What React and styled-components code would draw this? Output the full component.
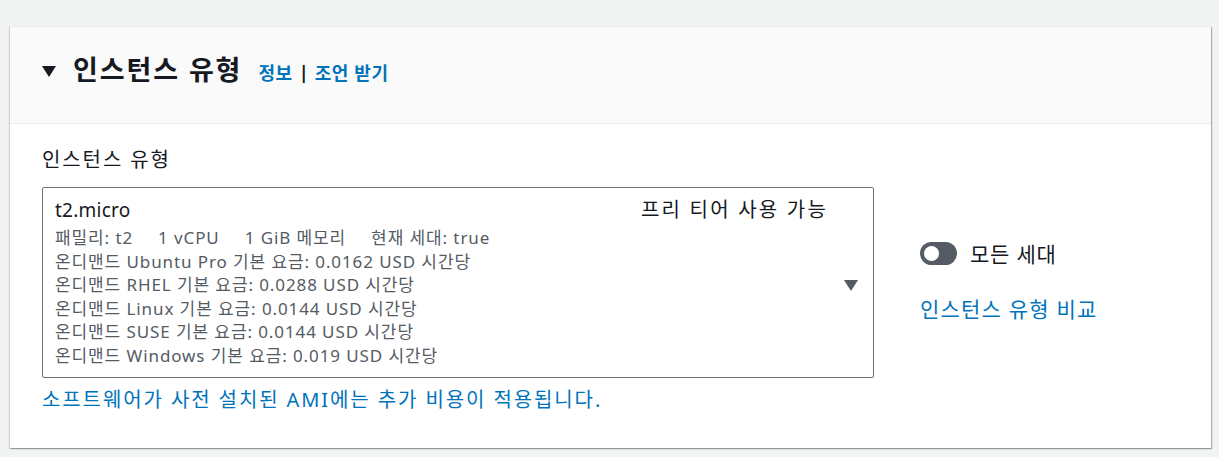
import React from "react";
import styled, { createGlobalStyle } from "styled-components";

const Global = createGlobalStyle`
  body {
    margin: 0;
    background: #f2f3f3;
    font-family: "Noto Sans", "Noto Sans CJK KR", sans-serif;
    color: #16191f;
  }
`;

const Page = styled.div`
  padding: 26px 8px 9px 10px;
`;

const Card = styled.section`
  background: #fff;
  border-top: 1px solid #e9ebed;
  box-shadow: 1px 1px 1px 0 rgba(0, 28, 36, 0.3), -1px 1px 1px 0 rgba(0, 28, 36, 0.15);
`;

const Header = styled.div`
  height: 97px;
  box-sizing: border-box;
  background: #fafafa;
  border-bottom: 1px solid #eaeded;
  display: flex;
  align-items: center;
  padding: 0 32px 10px 32px;
`;

const Caret = styled.span`
  width: 0;
  height: 0;
  border-left: 7px solid transparent;
  border-right: 7px solid transparent;
  border-top: 11px solid #16191f;
  margin-right: 17px;
  margin-top: 3px;
`;

const Title = styled.h2`
  margin: 0;
  font-size: 27px;
  line-height: 36px;
  letter-spacing: 1.9px;
  font-weight: 700;
  color: #16191f;
`;

const Links = styled.span`
  margin-left: 16px;
  margin-top: 4px;
  font-size: 18px;
  font-weight: 700;
  color: #16191f;
  display: flex;
  align-items: center;
  gap: 6px;
`;

const Link = styled.a`
  color: #0073bb;
  text-decoration: none;
  font-weight: ${(p) => (p.$bold ? 700 : 400)};
  letter-spacing: ${(p) => p.$spacing || "0px"};
`;

const Body = styled.div`
  padding: 22px 32px 34px 32px;
`;

const Label = styled.div`
  font-size: 20px;
  letter-spacing: 1.9px;
  line-height: 28px;
  margin-bottom: 13px;
`;

const Row = styled.div`
  display: flex;
  align-items: center;
  gap: 46px;
`;

const Select = styled.div`
  width: 832px;
  box-sizing: border-box;
  border: 1px solid #687078;
  border-radius: 2px;
  padding: 9px 12px 10px 12px;
  display: flex;
  align-items: center;
`;

const SelectContent = styled.div`
  flex: 1;
`;

const TopLine = styled.div`
  display: flex;
  justify-content: space-between;
  line-height: 26px;
  margin-bottom: 3px;
`;

const Name = styled.span`
  font-size: 19px;
  letter-spacing: 0.25px;
`;

const Badge = styled.span`
  font-size: 20px;
  margin-right: 12px;
  letter-spacing: 2.2px;
`;

const Detail = styled.div`
  font-size: 17px;
  letter-spacing: 0.9px;
  line-height: 23.5px;
  color: #545b64;
  display: flex;
  gap: 25px;
`;

const Arrow = styled.span`
  width: 0;
  height: 0;
  border-left: 7px solid transparent;
  border-right: 7px solid transparent;
  border-top: 11px solid #545b64;
  margin: 6px 3px 0 4px;
`;

const Side = styled.div`
  display: flex;
  flex-direction: column;
  gap: 27px;
  margin-top: -3px;
`;

const ToggleRow = styled.label`
  display: flex;
  align-items: center;
  gap: 13px;
  font-size: 21px;
  line-height: 28px;
  letter-spacing: 0.8px;
`;

const Toggle = styled.span`
  width: 37px;
  height: 23px;
  border-radius: 12px;
  background: #545b64;
  position: relative;
  &::after {
    content: "";
    position: absolute;
    left: 4px;
    top: 4px;
    width: 15px;
    height: 15px;
    border-radius: 50%;
    background: #fff;
  }
`;

const SideLink = styled(Link)`
  font-size: 21px;
  line-height: 28px;
`;

const Note = styled(Link)`
  display: block;
  margin-top: 8px;
  font-size: 20px;
  line-height: 28px;
`;

const prices = [
  ["Ubuntu Pro", "0.0162"],
  ["RHEL", "0.0288"],
  ["Linux", "0.0144"],
  ["SUSE", "0.0144"],
  ["Windows", "0.019"],
];

export default function App() {
  return (
    <>
      <Global />
      <Page>
        <Card>
          <Header>
            <Caret />
            <Title>인스턴스 유형</Title>
            <Links>
              <Link $bold $spacing="0.6px">정보</Link>|
              <Link $bold $spacing="0.6px">조언 받기</Link>
            </Links>
          </Header>
          <Body>
            <Label>인스턴스 유형</Label>
            <Row>
              <Select>
                <SelectContent>
                  <TopLine>
                    <Name>t2.micro</Name>
                    <Badge>프리 티어 사용 가능</Badge>
                  </TopLine>
                  <Detail>
                    <span>패밀리: t2</span>
                    <span>1 vCPU</span>
                    <span>1 GiB 메모리</span>
                    <span>현재 세대: true</span>
                  </Detail>
                  {prices.map(([os, p]) => (
                    <Detail key={os}>
                      온디맨드 {os} 기본 요금: {p} USD 시간당
                    </Detail>
                  ))}
                </SelectContent>
                <Arrow />
              </Select>
              <Side>
                <ToggleRow>
                  <Toggle />
                  모든 세대
                </ToggleRow>
                <SideLink $spacing="1.2px">인스턴스 유형 비교</SideLink>
              </Side>
            </Row>
            <Note $spacing="1.9px">소프트웨어가 사전 설치된 AMI에는 추가 비용이 적용됩니다.</Note>
          </Body>
        </Card>
      </Page>
    </>
  );
}
